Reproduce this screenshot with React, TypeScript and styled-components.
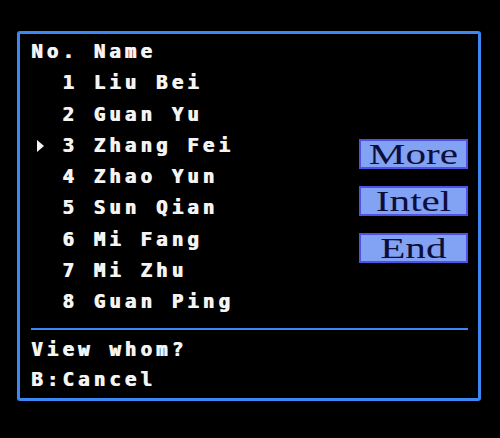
import React from "react";
import styled, { createGlobalStyle } from "styled-components";

const GlobalStyle = createGlobalStyle`
  html, body {
    margin: 0;
    padding: 0;
    background: #000;
  }
  body {
    width: 500px;
    height: 438px;
    overflow: hidden;
  }
`;

const Screen = styled.div`
  width: 500px;
  height: 438px;
  background: #000;
  padding: 31px 0 0 17px;
  box-sizing: border-box;
`;

const Frame = styled.div`
  width: 464px;
  height: 370px;
  box-sizing: border-box;
  border: 3px solid #3d87f2;
  border-radius: 3px;
  display: flex;
  flex-direction: column;
  padding: 2px 10px 0 11px;
  & > * {
    flex-shrink: 0;
  }
`;

const Top = styled.div`
  display: flex;
  justify-content: space-between;
`;

const List = styled.div`
  display: flex;
  flex-direction: column;
`;

const Line = styled.div<{ $pitch?: number }>`
  font-family: "DejaVu Sans Mono", "Liberation Mono", monospace;
  font-weight: bold;
  font-size: 19px;
  letter-spacing: 4.16px;
  color: #f4f4f4;
  text-shadow: 1px 0 0 #f4f4f4;
  white-space: pre;
  height: ${(p) => p.$pitch ?? 31.25}px;
  line-height: ${(p) => p.$pitch ?? 31.25}px;
  flex-shrink: 0;
`;

const Cursor = styled.span`
  display: inline-block;
  width: 15.6px;
  svg {
    display: inline-block;
    vertical-align: middle;
    margin-left: 6px;
  }
`;

const Buttons = styled.div`
  display: flex;
  flex-direction: column;
  gap: 17px;
  padding-top: 103px;
`;

const MenuButton = styled.div`
  width: 109px;
  height: 30px;
  box-sizing: border-box;
  border: 2px solid #4f52e4;
  background: #82a2f4;
  display: flex;
  align-items: center;
  justify-content: center;
`;

const ButtonLabel = styled.span`
  font-family: "Liberation Serif", "DejaVu Serif", serif;
  font-size: 29px;
  line-height: 26px;
  height: 26px;
  color: #0e0e3a;
  transform: scaleX(1.42);
  display: inline-block;
`;

const Divider = styled.div`
  height: 2px;
  background: #3d87f2;
  margin: 11px 0 4px 0;
`;

const officers = [
  "Liu Bei",
  "Guan Yu",
  "Zhang Fei",
  "Zhao Yun",
  "Sun Qian",
  "Mi Fang",
  "Mi Zhu",
  "Guan Ping",
];

const selected = 2;

export default function App() {
  return (
    <>
      <GlobalStyle />
      <Screen>
        <Frame>
          <Top>
            <List>
              <Line>No. Name</Line>
              {officers.map((name, i) => (
                <Line key={name}>
                  <Cursor>
                    {i === selected && (
                      <svg width="7" height="12" viewBox="0 0 7 12">
                        <polygon points="0,0 7,6 0,12" fill="#f4f4f4" />
                      </svg>
                    )}
                  </Cursor>
                  {` ${i + 1} ${name}`}
                </Line>
              ))}
            </List>
            <Buttons>
              <MenuButton>
                <ButtonLabel>More</ButtonLabel>
              </MenuButton>
              <MenuButton>
                <ButtonLabel>Intel</ButtonLabel>
              </MenuButton>
              <MenuButton>
                <ButtonLabel>End</ButtonLabel>
              </MenuButton>
            </Buttons>
          </Top>
          <Divider />
          <Line $pitch={30}>View whom?</Line>
          <Line $pitch={30}>B:Cancel</Line>
        </Frame>
      </Screen>
    </>
  );
}
